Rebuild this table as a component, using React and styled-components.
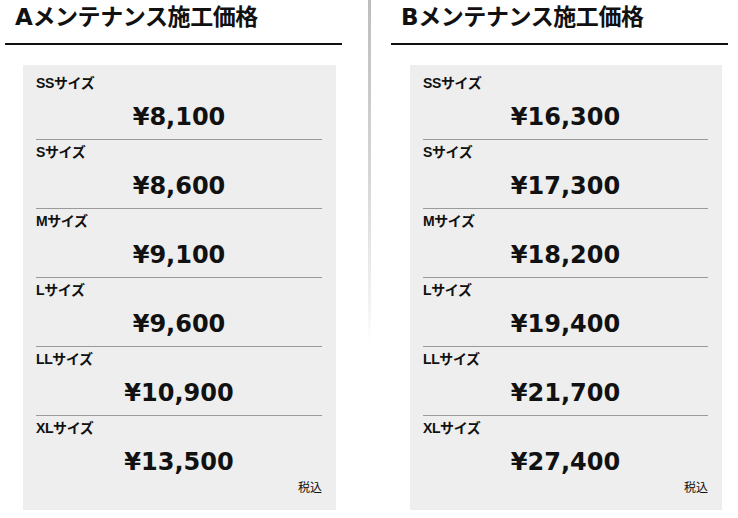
import React from 'react'
import styled, { createGlobalStyle } from 'styled-components'

const GlobalStyle = createGlobalStyle`
  html, body {
    margin: 0;
    padding: 0;
    background: #fff;
    color: #111;
    font-family: "Liberation Sans", "Noto Sans CJK JP", sans-serif;
  }
`

const Page = styled.div`
  display: flex;
  align-items: flex-start;
  width: 738px;
  height: 518px;
  padding-left: 5px;
  box-sizing: border-box;
`

const Column = styled.section`
  width: 337px;
  flex: none;
`

const Divider = styled.div`
  width: 3px;
  height: 518px;
  margin: 0 20px 0 26px;
  flex: none;
  background: linear-gradient(to bottom, #bcbdbc 0%, #d6d7d6 35%, #f4f4f4 60%, #fff 66%, #fff 100%);
`

const Heading = styled.h2`
  margin: 0;
  padding: 3px 0 0 ${props => props.indent}px;
  height: 45px;
  box-sizing: border-box;
  border-bottom: 2px solid #111;
  font-family: "DejaVu Sans", "Noto Sans CJK JP", sans-serif;
  font-size: 23px;
  font-weight: bold;
  line-height: 28px;
  letter-spacing: -0.4px;
`

const Panel = styled.div`
  margin: 20px 6px 0 ${props => props.inset}px;
  padding: 6px 14px 14px 13px;
  background: #edeeed;
`

const Row = styled.div`
  padding: 4px 0 7px;
  border-bottom: ${props => props.last ? 'none' : '1px solid #9a9a9a'};
`

const SizeLabel = styled.div`
  font-size: 14px;
  font-weight: bold;
  line-height: 16px;
  letter-spacing: -0.4px;
`

const Price = styled.div`
  margin-top: 11px;
  text-align: center;
  font-family: "DejaVu Sans", sans-serif;
  font-size: 24px;
  font-weight: bold;
  line-height: 30px;
`

const TaxNote = styled.div`
  margin-top: -4px;
  text-align: right;
  font-size: 12px;
  line-height: 16px;
`

const sizes = ['SS', 'S', 'M', 'L', 'LL', 'XL']

const plans = [
  { title: 'Aメンテナンス施工価格', indent: 10, inset: 18, prices: ['¥8,100', '¥8,600', '¥9,100', '¥9,600', '¥10,900', '¥13,500'] },
  { title: 'Bメンテナンス施工価格', indent: 10, inset: 19, prices: ['¥16,300', '¥17,300', '¥18,200', '¥19,400', '¥21,700', '¥27,400'] },
]

const PriceTable = ({ plan }) => (
  <Column>
    <Heading indent={plan.indent}>{plan.title}</Heading>
    <Panel inset={plan.inset}>
      {sizes.map((size, i) => (
        <Row key={size} last={i === sizes.length - 1}>
          <SizeLabel>{size}サイズ</SizeLabel>
          <Price>{plan.prices[i]}</Price>
        </Row>
      ))}
      <TaxNote>税込</TaxNote>
    </Panel>
  </Column>
)

export default function App() {
  return (
    <>
      <GlobalStyle />
      <Page>
        <PriceTable plan={plans[0]} />
        <Divider />
        <PriceTable plan={plans[1]} />
      </Page>
    </>
  )
}
